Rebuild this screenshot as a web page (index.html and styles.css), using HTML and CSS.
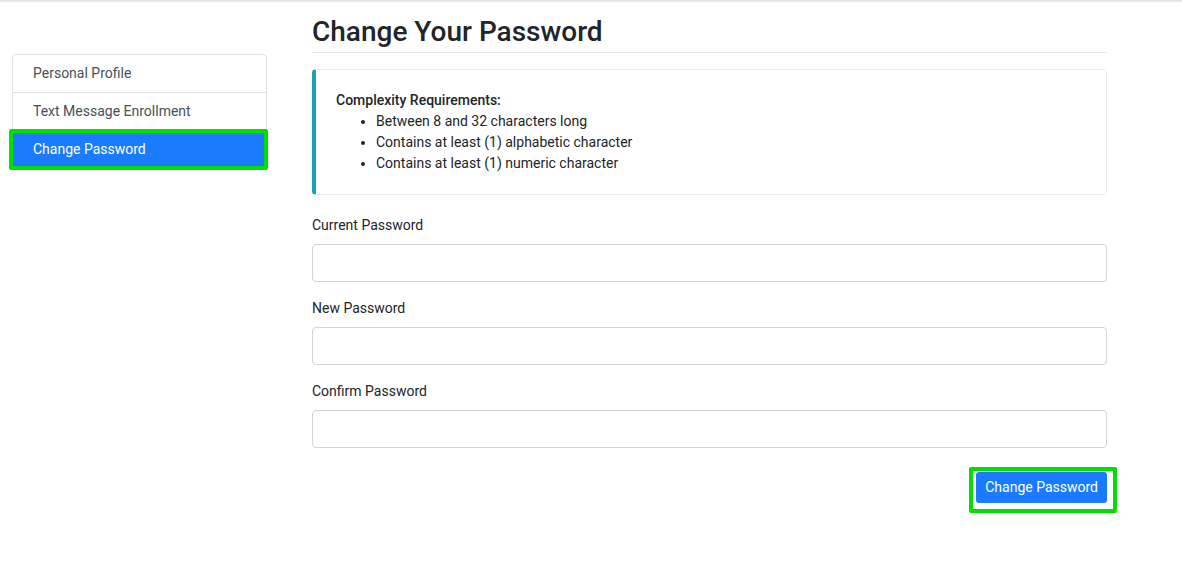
FILE: index.html
```html
<!DOCTYPE html>
<html lang="en">
<head>
<meta charset="utf-8">
<title>Change Your Password</title>
<link rel="stylesheet" href="styles.css">
</head>
<body>
<div class="topbar"></div>
<div class="layout">
  <nav class="sidebar">
    <a class="nav-item" href="#">Personal Profile</a>
    <a class="nav-item" href="#">Text Message Enrollment</a>
    <a class="nav-item active" href="#">Change Password<span class="highlight"></span></a>
  </nav>
  <main class="content">
    <h2 class="page-title">Change Your Password</h2>
    <div class="alert">
      <div class="alert-title">Complexity Requirements:</div>
      <ul class="req-list">
        <li>Between 8 and 32 characters long</li>
        <li>Contains at least (1) alphabetic character</li>
        <li>Contains at least (1) numeric character</li>
      </ul>
    </div>
    <form class="form">
      <div class="field">
        <label class="label" for="cur">Current Password</label>
        <input class="input" id="cur" type="password">
      </div>
      <div class="field">
        <label class="label" for="new">New Password</label>
        <input class="input" id="new" type="password">
      </div>
      <div class="field">
        <label class="label" for="conf">Confirm Password</label>
        <input class="input" id="conf" type="password">
      </div>
      <div class="actions">
        <div class="btn-hl">
          <button class="btn" type="button">Change Password</button>
        </div>
      </div>
    </form>
  </main>
</div>
</body>
</html>
```

FILE: styles.css
```css
* { box-sizing: border-box; }
html, body { margin: 0; padding: 0; background: #fff; }
body {
  font-family: Roboto, "Liberation Sans", Arial, sans-serif;
  font-size: 14px;
  line-height: 21px;
  color: #212529;
  min-height: 580px;
}
.topbar {
  height: 3px;
  background: linear-gradient(#dcdcdc, #f4f4f4 70%, #ffffff);
}
.layout {
  display: flex;
  gap: 45px;
  padding-left: 12px;
}
.sidebar {
  width: 255px;
  margin-top: 51px;
  display: flex;
  flex-direction: column;
  border: 1px solid #dee2e6;
  border-radius: 4px;
  align-self: flex-start;
}
.nav-item {
  position: relative;
  display: block;
  padding: 8px 20px;
  color: #495057;
  text-decoration: none;
  border-bottom: 1px solid #dee2e6;
  height: 38px;
}
.nav-item:last-child { border-bottom: none; }
.nav-item.active {
  background: #1a7bff;
  color: #fff;
  margin: 0 -1px -1px -1px;
  padding-left: 21px;
  height: 38px;
  border-radius: 0 0 4px 4px;
}
.highlight {
  position: absolute;
  left: -3px;
  right: -1px;
  top: -2px;
  bottom: -1px;
  border: 4px solid #00e000;
  border-radius: 2px;
  pointer-events: none;
}
.content {
  width: 795px;
  padding-top: 12px;
}
.page-title {
  margin: 0 0 16px;
  font-size: 28px;
  font-weight: 500;
  line-height: 34px;
  padding-bottom: 3px;
  border-bottom: 1px solid #e3e6ea;
  color: #212529;
}
.alert {
  border: 1px solid #e9ecef;
  border-left: 4px solid #17a2b8;
  border-radius: 4px;
  padding: 20px;
  margin-bottom: 20px;
}
.alert-title { font-weight: 500; }
.req-list {
  margin: 0;
  padding-left: 40px;
}
.field { margin-bottom: 16px; }
.label {
  display: block;
  margin-bottom: 8px;
}
.input {
  display: block;
  width: 100%;
  height: 38px;
  border: 1px solid #ced4da;
  border-radius: 4px;
  background: #fff;
  font: inherit;
  padding: 6px 12px;
}
.actions {
  display: flex;
  justify-content: flex-end;
  padding-top: 3px;
  margin-right: -10px;
}
.btn-hl {
  display: flex;
  border: 4px solid #00e000;
  border-radius: 2px;
  padding: 1px 6px 6px 3px;
}
.btn {
  background: #1a7bff;
  color: #fff;
  border: none;
  border-radius: 3px;
  font: inherit;
  padding: 5px 9px;
  height: 31px;
  cursor: pointer;
}
```
